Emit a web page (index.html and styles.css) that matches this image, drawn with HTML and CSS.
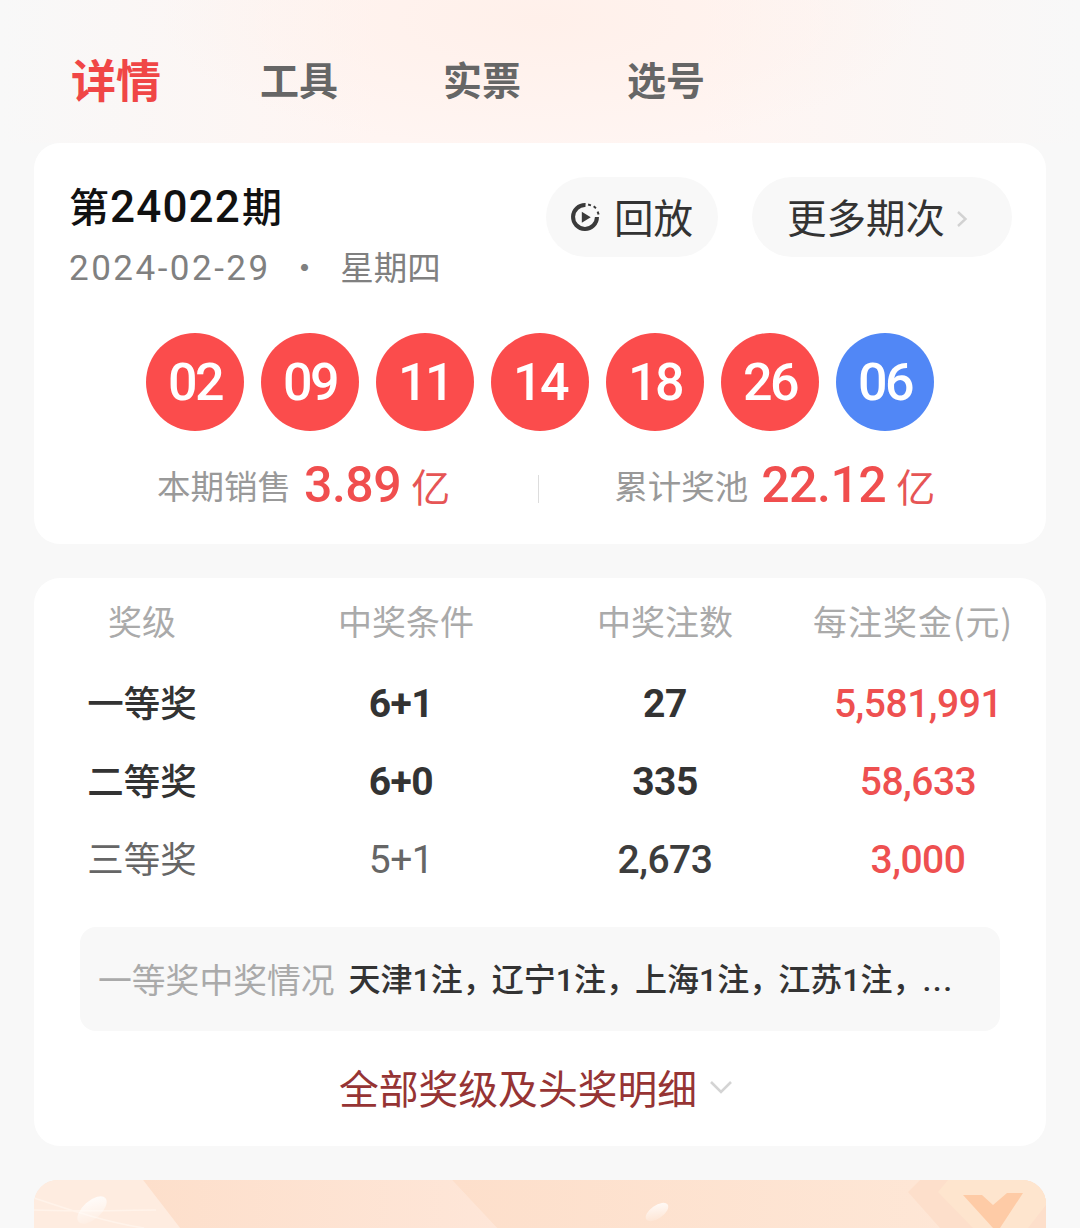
FILE: index.html
```html
<!DOCTYPE html>
<html lang="zh-CN">
<head>
<meta charset="utf-8">
<title>第24022期</title>
<link rel="stylesheet" href="styles.css">
</head>
<body>
<div class="page">
  <header class="top">
    <nav class="tabs">
      <span class="tab active">详情</span>
      <span class="tab t2">工具</span>
      <span class="tab t3">实票</span>
      <span class="tab t4">选号</span>
    </nav>
  </header>

  <section class="card draw">
    <div class="draw-head">
      <div class="issue">
        <h1 class="issue-no">第<span class="issue-digits">24022</span>期</h1>
        <p class="issue-date"><span class="date-digits">2024-02-29</span><span class="dot">·</span><span class="week">星期四</span></p>
      </div>
      <div class="actions">
        <div class="pill replay">
          <svg class="play" viewBox="0 0 30 30" aria-hidden="true">
            <path d="M15.5 3.8A11.2 11.2 0 1 0 26.2 15" fill="none" stroke="#3a3a3a" stroke-width="3.8"/>
            <path d="M12 10 20.4 15.2 12 20.4z" fill="#3a3a3a"/>
            <path d="M19.5 2.8 19 4.6M24.8 5.2 23.6 6.6M28.2 11 26.4 11.6" fill="none" stroke="#3a3a3a" stroke-width="2.8"/>
          </svg>
          <span>回放</span>
        </div>
        <div class="pill more">
          <span>更多期次</span>
          <svg class="chev-r" viewBox="0 0 12 20" aria-hidden="true"><path d="M2 3l7.5 7L2 17" fill="none" stroke="#d2d2d2" stroke-width="2.4"/></svg>
        </div>
      </div>
    </div>
    <div class="balls">
      <span class="ball">02</span><span class="ball">09</span><span class="ball">11</span><span class="ball">14</span><span class="ball">18</span><span class="ball">26</span><span class="ball blue">06</span>
    </div>
    <div class="stats">
      <div class="stat s1"><span class="stat-label">本期销售</span><span class="stat-num">3.89</span><span class="stat-unit">亿</span></div>
      <i class="sep"></i>
      <div class="stat s2"><span class="stat-label">累计奖池</span><span class="stat-num">22.12</span><span class="stat-unit">亿</span></div>
    </div>
  </section>

  <section class="card prizes">
    <div class="row head">
      <span>奖级</span><span>中奖条件</span><span>中奖注数</span><span class="c4">每注奖金(元)</span>
    </div>
    <div class="row item strong">
      <span class="name">一等奖</span><span class="c2">6+1</span><span>27</span><span class="c4 money">5,581,991</span>
    </div>
    <div class="row item strong">
      <span class="name">二等奖</span><span class="c2">6+0</span><span>335</span><span class="c4 money">58,633</span>
    </div>
    <div class="row item plain">
      <span class="name">三等奖</span><span class="c2">5+1</span><span class="c3">2,673</span><span class="c4 money">3,000</span>
    </div>
    <div class="winners">
      <span class="winners-label">一等奖中奖情况</span>
      <span class="winners-text">天津1注<span class="cm">，</span>辽宁1注<span class="cm">，</span>上海1注<span class="cm">，</span>江苏1注<span class="cm">，</span><span class="more-dots">...</span></span>
    </div>
    <div class="all">
      <span>全部奖级及头奖明细</span>
      <svg class="chev-d" viewBox="0 0 24 16" aria-hidden="true"><path d="M2 3l10 10L22 3" fill="none" stroke="#d4d4d4" stroke-width="2.6"/></svg>
    </div>
  </section>

  <section class="promo">
    <svg class="promo-art" viewBox="0 0 1012 48" aria-hidden="true">
      <defs>
        <linearGradient id="seg1" x1="0" y1="0" x2="1" y2="0"><stop offset="0" stop-color="#fddfcb"/><stop offset="1" stop-color="#fee6d8"/></linearGradient>
        <linearGradient id="seg2" x1="0" y1="0" x2="1" y2="0"><stop offset="0" stop-color="#fddfcb"/><stop offset="1" stop-color="#fee8d8"/></linearGradient>
        <linearGradient id="seed" x1="0" y1="1" x2="1" y2="0"><stop offset="0" stop-color="#fff" stop-opacity="0"/><stop offset="1" stop-color="#fff" stop-opacity=".95"/></linearGradient>
      </defs>
      <path d="M418 0H1012V48H463z" fill="url(#seg2)"/>
      <path d="M109 0H418L463 48H146z" fill="url(#seg1)"/>
      <path d="M0 0H109L146 48H0z" fill="#feece0"/>
      <path d="M0 18C30 28 70 42 110 48M0 30C40 32 90 30 122 30" fill="none" stroke="#fff3ea" stroke-width="1.5"/>
      <path d="M886 0H1012V48H906L874 12z" fill="#fddfcb"/>
      <path d="M914 0H1012V25L994 48H939L904 12z" fill="#fee5ce"/>
      <path d="M929 15H948L959 25 973 13H989L966 48H959z" fill="#fecba6"/>
      <ellipse cx="58" cy="30" rx="18" ry="9" transform="rotate(-42 58 30)" fill="url(#seed)"/>
      <ellipse cx="623" cy="32" rx="13" ry="6.5" transform="rotate(-35 623 32)" fill="url(#seed)"/>
    </svg>
  </section>
</div>
</body>
</html>
```
FILE: styles.css
```css
* { box-sizing: border-box; }
html, body { margin: 0; padding: 0; }
body {
  width: 1080px;
  height: 1228px;
  overflow: hidden;
  background: #f8f8f8;
  font-family: "Noto Sans CJK SC", "Noto Sans", sans-serif;
  color: #333;
}
.top {
  height: 143px;
  background:
    radial-gradient(ellipse 380px 130px at 540px 20px, #fff0ea 0%, rgba(255,240,234,0) 100%),
    linear-gradient(90deg, #f8f8f8 0%, #fff5f2 35%, #fff5f2 65%, #f8f8f8 100%);
}
.tabs { display: flex; align-items: center; height: 163px; padding: 0 0 6px 71px; }
.tab { font-size: 39px; font-weight: 700; color: #666; line-height: 1; }
.tab.active { font-size: 45px; color: #f04646; }
.t2 { margin-left: 99px; }
.t3 { margin-left: 105px; }
.t4 { margin-left: 106px; }

.card { background: #fff; border-radius: 26px; margin: 0 34px; }
.draw { height: 401px; padding: 36px 34px 0 36px; }
.draw-head { display: flex; justify-content: space-between; }
.issue-no { margin: -2px 0 0 -1px; font-size: 40px; font-weight: 500; line-height: 56px; color: #111; }
.issue-digits { font-family: Roboto, sans-serif; font-size: 44px; letter-spacing: 1.2px; margin: 0 1px; }
.issue-date { margin: 12px 0 0 -1px; font-size: 33.5px; line-height: 44px; color: #808080; display: flex; }
.date-digits { font-family: Roboto, sans-serif; font-size: 35px; letter-spacing: 2.5px; }
.dot { margin: -3px 19px 0 17px; }
.week { margin-top: -3px; }
.actions { display: flex; gap: 34px; margin-top: -2px; }
.pill { height: 80px; border-radius: 40px; background: #f8f8f8; display: flex; align-items: center; font-size: 39.5px; color: #333; line-height: 1; }
.pill span { padding-bottom: 2px; }
.replay { width: 172px; padding-left: 23px; gap: 13px; }
.more { width: 260px; padding-left: 35px; gap: 11px; }
.play { width: 32px; height: 32px; }
.chev-r { width: 12px; height: 20px; margin-top: 4px; }

.balls { display: flex; justify-content: center; gap: 17px; margin: 42px 0 0 -2px; }
.ball {
  width: 98px; height: 98px; border-radius: 50%;
  background: #fb4c4c; color: #fff;
  display: flex; align-items: center; justify-content: center;
  font-family: Roboto, sans-serif; font-size: 52px; font-weight: 500; letter-spacing: -2.6px;
}
.ball.blue { background: #5187f6; }

.stats { display: flex; align-items: center; margin-top: 24px; height: 60px; }
.stat { display: flex; align-items: center; }
.s1 { margin-left: 87px; }
.s2 { margin-left: 75px; }
.sep { width: 1px; height: 28px; background: #ddd; margin-left: 88px; margin-top: 8px; }
.stat-label { font-size: 33.5px; color: #999; line-height: 1; }
.stat-num { font-family: Roboto, sans-serif; font-size: 50px; font-weight: 500; color: #f04e4e; margin-left: 13px; letter-spacing: -.5px; line-height: 1; }
.stat-unit { font-size: 39px; color: #e65555; margin-left: 10px; line-height: 1; }

.prizes { height: 568px; margin-top: 34px; padding-top: 14px; }
.row { display: grid; grid-template-columns: 216px 312px 206px 278px; text-align: center; align-items: center; }
.head { height: 56px; font-size: 34px; color: #aaa; }
.head .c4 { padding-left: 12px; white-space: nowrap; letter-spacing: 1px; }
.item { height: 78px; font-family: Roboto, sans-serif; font-size: 39px; letter-spacing: -.5px; }
.item .c4 { padding-left: 22px; }
.item .c2 { padding-right: 10px; }
.name { font-family: "Noto Sans CJK SC", sans-serif; font-size: 36.5px; letter-spacing: 0; padding-bottom: 6px; }
.strong { font-weight: 700; color: #333; }
.strong .name { font-weight: 500; }
.strong .money, .plain .money { color: #ee5050; font-weight: 500; }
.plain { color: #666; }
.plain .c3 { color: #3d3d3d; font-weight: 500; }
.head + .item { margin-top: 17px; }
.winners {
  margin: 28px 46px 0; height: 104px; padding: 0 18px;
  background: #f8f8f8; border-radius: 16px;
  display: flex; align-items: center; gap: 14px;
  font-size: 33.8px; white-space: nowrap;
  overflow: hidden;
}
.winners-label { color: #aaa; padding-bottom: 2px; }
.winners-text { color: #333; font-size: 32px; font-weight: 500; font-family: Roboto, "Noto Sans CJK SC", sans-serif; padding-bottom: 4px; }
.cm { margin-right: -3px; }
.more-dots { letter-spacing: 1.5px; margin-left: 1px; }
.all { display: flex; align-items: center; justify-content: center; gap: 12px; margin: 27px 0 0 -8px; font-size: 39.8px; color: #963434; }
.chev-d { width: 24px; height: 16px; }

.promo { height: 48px; margin: 34px 34px 0; border-radius: 24px 24px 0 0; background: #fee5d5; overflow: hidden; }
.promo-art { display: block; width: 100%; height: 100%; }
```
